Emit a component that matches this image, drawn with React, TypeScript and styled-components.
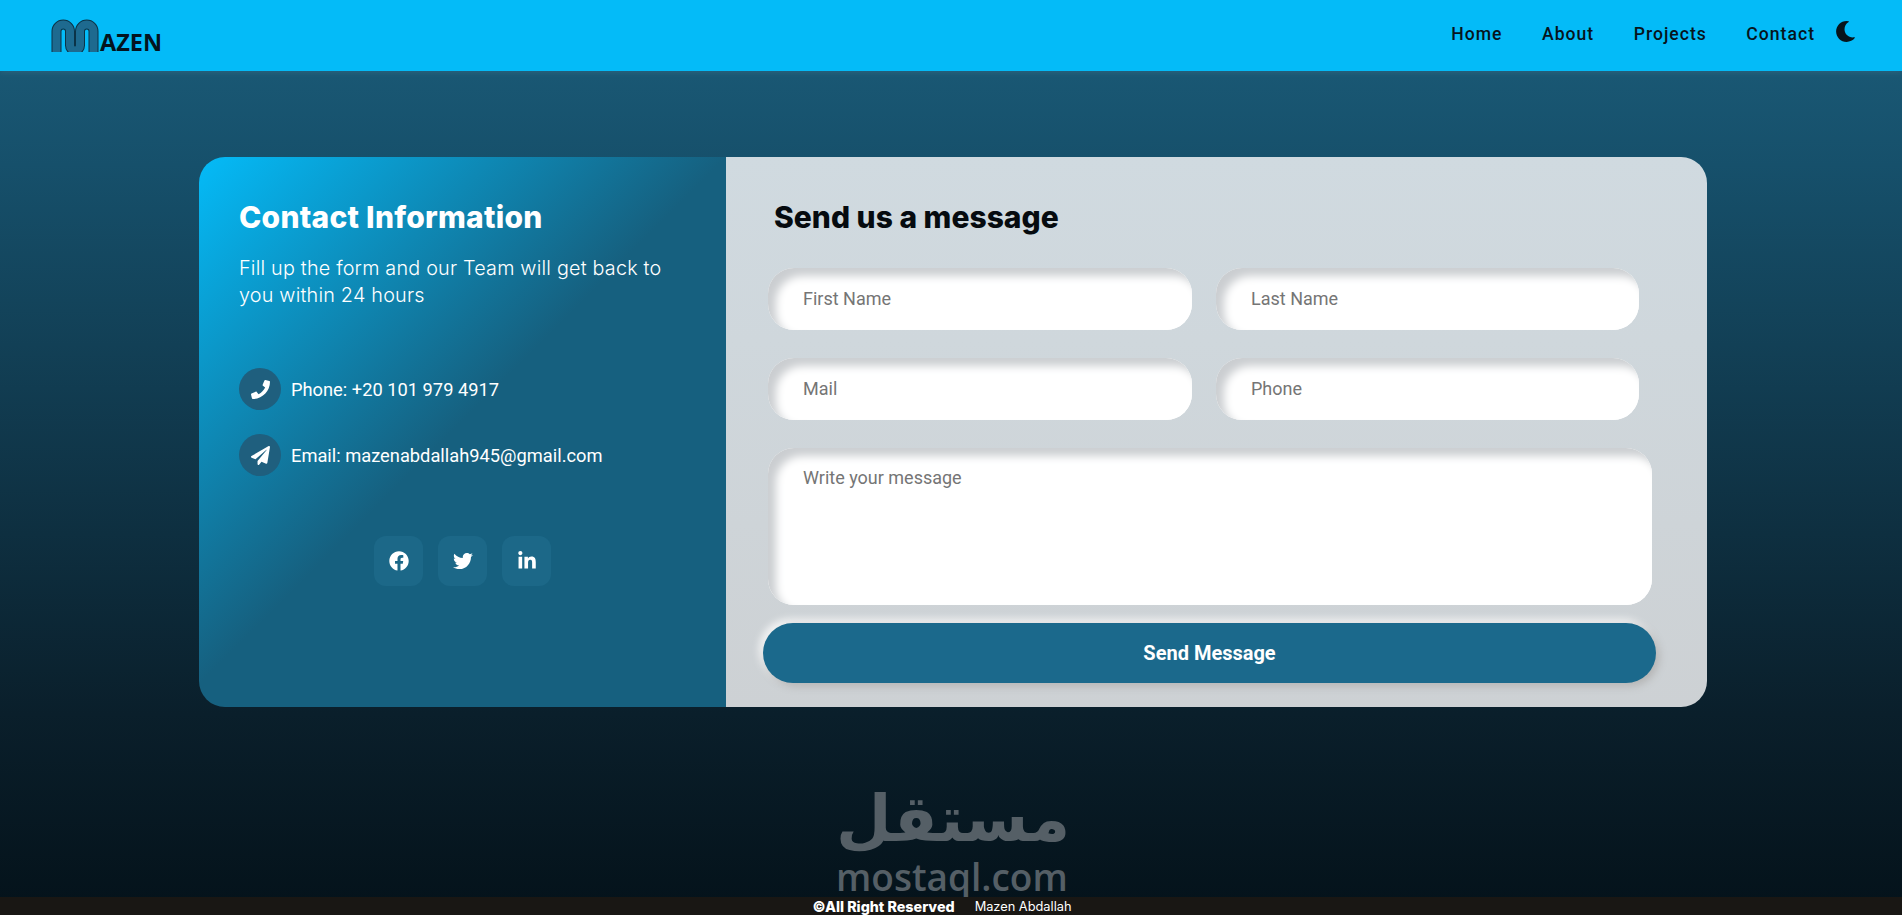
import React from 'react'
import styled, { createGlobalStyle } from 'styled-components'
import { FaFacebook, FaLinkedinIn, FaMoon, FaPaperPlane, FaPhone, FaTwitter } from 'react-icons/fa'

const GlobalStyle = createGlobalStyle`
  * {
    box-sizing: border-box;
  }
  html, body {
    margin: 0;
    padding: 0;
    height: 100%;
  }
  body {
    font-family: Roboto, "Liberation Sans", sans-serif;
    overflow: hidden;
  }
`

const Page = styled.div`
  position: relative;
  display: flex;
  flex-direction: column;
  height: 915px;
  background: linear-gradient(180deg, #1c5d7a 0%, #16506b 18%, #0a1f2b 78%, #04121a 100%);
`

const Navbar = styled.header`
  display: flex;
  justify-content: space-between;
  align-items: center;
  flex: 0 0 71px;
  padding: 0 46px 4px 51px;
  background: #04bbf8;
  box-shadow: 0 2px 6px rgba(255, 255, 255, 0.07);
`

const Logo = styled.div`
  display: flex;
  align-items: flex-end;
  height: 33px;
  margin-top: 3px;
`

const LogoText = styled.span`
  margin-left: 1px;
  font-family: "Open Sans", sans-serif;
  font-size: 23.5px;
  font-weight: 700;
  line-height: 19px;
  color: #04141f;
`

const NavLinks = styled.nav`
  display: flex;
  align-items: center;
  gap: 39.5px;
`

const NavLink = styled.a`
  font-size: 17.6px;
  font-weight: 500;
  letter-spacing: 1px;
  color: #07141c;
`

const ThemeToggle = styled.span`
  display: flex;
  margin: -4px 0 0 -19.5px;
  font-size: 21px;
  color: #07141c;
`

const Main = styled.main`
  flex: 1;
  padding: 86px 195px 0 199px;
`

const Card = styled.section`
  display: grid;
  grid-template-columns: 527px 1fr;
  height: 550px;
  border-radius: 26px;
  overflow: hidden;
`

const InfoPanel = styled.div`
  padding: 38px 40px 0;
  background: linear-gradient(135deg, #04bbf8 0%, #16607f 49%);
  color: #fff;
`

const PanelTitle = styled.h2<{ $dark?: boolean }>`
  margin: 0;
  font-family: Inter, sans-serif;
  font-size: 30px;
  font-weight: 800;
  line-height: 44px;
  letter-spacing: ${({ $dark }) => ($dark ? '0' : '0.25px')};
  color: ${({ $dark }) => ($dark ? '#060b0f' : '#fff')};
`

const Intro = styled.p`
  margin: 16px 0 0;
  font-family: Inter, sans-serif;
  font-size: 19.8px;
  font-weight: 300;
  line-height: 26.5px;
  letter-spacing: 0.2px;
`

const ContactList = styled.div`
  display: flex;
  flex-direction: column;
  gap: 24px;
  margin-top: 60px;
`

const ContactRow = styled.div`
  display: flex;
  align-items: center;
  gap: 10px;
  font-size: 18.3px;
`

const IconBubble = styled.span`
  display: flex;
  align-items: center;
  justify-content: center;
  width: 42px;
  height: 42px;
  border-radius: 50%;
  background: #1f5f7e;
  font-size: 19px;
`

const Socials = styled.div`
  display: flex;
  justify-content: center;
  gap: 15px;
  margin-top: 60px;
`

const SocialButton = styled.a`
  display: flex;
  align-items: center;
  padding: 0 14.5px;
  height: 50px;
  border-radius: 12px;
  background: #1c6888;
  font-size: 20px;
  color: #fff;
`

const FormPanel = styled.div`
  padding: 38px 0 0 42px;
  background: linear-gradient(180deg, #d0dae0 0%, #cdd1d4 100%);
`

const FormTitle = styled(PanelTitle)`
  margin-left: 6px;
`

const Form = styled.form`
  display: flex;
  flex-direction: column;
  margin-top: 29px;
`

const FieldGrid = styled.div`
  display: grid;
  grid-template-columns: 424px 423px;
  gap: 28px 24px;
`

const fieldStyles = `
  border: none;
  outline: none;
  border-radius: 26px;
  background: #fff;
  box-shadow: inset 8px 8px 8px #cbced1, inset -8px -8px 8px #ffffff;
  font-family: Roboto, sans-serif;
  font-size: 18px;
  color: #222;
  &::placeholder {
    color: #757575;
    opacity: 1;
  }
`

const TextField = styled.input`
  ${fieldStyles}
  height: 62px;
  padding: 0 35px 2px;
`

const MessageField = styled.textarea`
  ${fieldStyles}
  display: block;
  width: 884px;
  height: 157px;
  margin-top: 28px;
  padding: 19px 35px;
  resize: none;
`

const SendButton = styled.button`
  width: 893px;
  height: 60px;
  margin: 18px 0 0 -5px;
  border: none;
  border-radius: 30px;
  background: #1b698c;
  box-shadow: 3px 3px 8px #b1b1b1, -3px -3px 8px #ffffff;
  font-family: Roboto, sans-serif;
  font-size: 20px;
  font-weight: 700;
  color: #fff;
`

const Watermark = styled.div`
  position: absolute;
  left: 836px;
  top: 778px;
  width: 230px;
  text-align: center;
  color: #555f66;
  pointer-events: none;
`

const WatermarkArabic = styled.div`
  font-family: "DejaVu Sans", sans-serif;
  font-size: 64px;
  font-weight: 700;
  line-height: 82px;
`

const WatermarkLatin = styled.div`
  font-family: "Open Sans", sans-serif;
  font-size: 37px;
  font-weight: 600;
  line-height: 34px;
`

const Footer = styled.footer`
  position: relative;
  display: flex;
  justify-content: center;
  align-items: center;
  gap: 20px;
  flex: 0 0 18px;
  padding-right: 18px;
  background: #191714;
  color: #fff;
  font-family: Inter, sans-serif;
`

const Copyright = styled.strong`
  font-size: 14.3px;
  font-weight: 800;
`

const Credit = styled.span`
  font-size: 12.8px;
  font-weight: 400;
`

function MazenMark() {
  const tube = 'M5.5 33V12.25a6.75 6.75 0 0 1 13.5 0V26.5a5 5 0 0 0 10 0V12.25a6.75 6.75 0 0 1 13.5 0V33'
  return (
    <svg width="48" height="33" viewBox="0 0 48 33" fill="none">
      <path d={tube} stroke="#0b3347" strokeWidth="10" />
      <path d={tube} stroke="#1e6a8f" strokeWidth="8" />
    </svg>
  )
}

export default function App() {
  return (
    <Page>
      <GlobalStyle />
      <Navbar>
        <Logo>
          <MazenMark />
          <LogoText>AZEN</LogoText>
        </Logo>
        <NavLinks>
          <NavLink>Home</NavLink>
          <NavLink>About</NavLink>
          <NavLink>Projects</NavLink>
          <NavLink>Contact</NavLink>
          <ThemeToggle>
            <FaMoon />
          </ThemeToggle>
        </NavLinks>
      </Navbar>

      <Main>
        <Card>
          <InfoPanel>
            <PanelTitle>Contact Information</PanelTitle>
            <Intro>
              Fill up the form and our Team will get back to
              <br />
              you within 24 hours
            </Intro>
            <ContactList>
              <ContactRow>
                <IconBubble>
                  <FaPhone />
                </IconBubble>
                Phone: +20 101 979 4917
              </ContactRow>
              <ContactRow>
                <IconBubble>
                  <FaPaperPlane />
                </IconBubble>
                Email: mazenabdallah945@gmail.com
              </ContactRow>
            </ContactList>
            <Socials>
              <SocialButton>
                <FaFacebook />
              </SocialButton>
              <SocialButton>
                <FaTwitter />
              </SocialButton>
              <SocialButton>
                <FaLinkedinIn />
              </SocialButton>
            </Socials>
          </InfoPanel>

          <FormPanel>
            <FormTitle $dark>Send us a message</FormTitle>
            <Form>
              <FieldGrid>
                <TextField placeholder="First Name" />
                <TextField placeholder="Last Name" />
                <TextField placeholder="Mail" />
                <TextField placeholder="Phone" />
              </FieldGrid>
              <MessageField placeholder="Write your message" />
              <SendButton type="button">Send Message</SendButton>
            </Form>
          </FormPanel>
        </Card>
      </Main>

      <Watermark>
        <WatermarkArabic>مستقل</WatermarkArabic>
        <WatermarkLatin>mostaql.com</WatermarkLatin>
      </Watermark>

      <Footer>
        <Copyright>©All Right Reserved</Copyright>
        <Credit>Mazen Abdallah</Credit>
      </Footer>
    </Page>
  )
}
